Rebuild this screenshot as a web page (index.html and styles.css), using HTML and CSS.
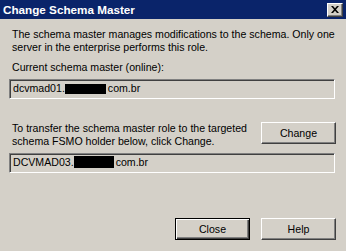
FILE: index.html
```html
<!DOCTYPE html>
<html>
<head>
<meta charset="utf-8">
<link rel="stylesheet" href="styles.css">
</head>
<body>
<div class="dialog">
  <div class="titlebar">
    <span class="title">Change Schema Master</span>
    <span class="close-btn"><svg width="8" height="7" viewBox="0 0 8 7"><path d="M0 0h2l2 2.3L6 0h2L5 3.5 8 7H6L4 4.7 2 7H0l3-3.5z" fill="#000"/></svg></span>
  </div>
  <div class="content">
    <p class="desc">The schema master manages modifications to the schema. Only one<br>server in the enterprise performs this role.</p>
    <div class="label">Current schema master (online):</div>
    <div class="field">dcvmad01.<span class="redact r1"></span>com.br</div>
    <div class="transfer-row">
      <p class="desc">To transfer the schema master role to the targeted<br>schema FSMO holder below, click Change.</p>
      <button class="btn">Change</button>
    </div>
    <div class="field f2">DCVMAD03.<span class="redact r2"></span>com.br</div>
    <div class="footer">
      <button class="btn default">Close</button>
      <button class="btn">Help</button>
    </div>
  </div>
</div>
</body>
</html>
```
FILE: styles.css
```css
html, body {
  margin: 0;
  padding: 0;
}
body {
  width: 346px;
  height: 251px;
  overflow: hidden;
  background: #d4d0c8;
  font-family: "Liberation Sans", Arial, sans-serif;
  font-size: 10.6px;
  color: #000;
}
.dialog {
  display: flex;
  flex-direction: column;
  height: 251px;
}
.titlebar {
  height: 19px;
  background: #0a246a;
  display: flex;
  align-items: center;
  justify-content: space-between;
  padding: 0 3px;
}
.title {
  color: #fff;
  font-weight: bold;
  font-size: 11.7px;
}
.close-btn {
  width: 16px;
  height: 14px;
  box-sizing: border-box;
  background: #d4d0c8;
  border: 1px solid;
  border-color: #fff #404040 #404040 #fff;
  box-shadow: inset -1px -1px #808080;
  display: flex;
  align-items: center;
  justify-content: center;
}
.close-btn svg {
  display: block;
}
.content {
  display: flex;
  flex-direction: column;
  padding: 9px 10px 0 9px;
}
.desc {
  margin: 0 0 0 3px;
  line-height: 13px;
}
.label {
  margin: 7px 0 0 3px;
  line-height: 13px;
}
.field {
  margin: 5px 1px 0 0;
  height: 20px;
  box-sizing: border-box;
  border: 1px solid;
  border-color: #808080 #fff #fff #808080;
  box-shadow: inset 1px 1px #404040, inset -1px -1px #d4d0c8;
  padding: 2px 0 0 3px;
  line-height: 13px;
  white-space: nowrap;
}
.redact {
  display: inline-block;
  background: #000;
  margin-right: 2px;
  vertical-align: -2px;
}
.r1 {
  width: 41px;
  height: 10px;
}
.r2 {
  width: 40px;
  height: 12px;
}
.transfer-row {
  margin-top: 23px;
  display: flex;
  justify-content: space-between;
  align-items: flex-start;
}
.btn {
  width: 75px;
  height: 22px;
  padding: 0;
  font-family: inherit;
  font-size: 10.6px;
  line-height: 13px;
  color: #000;
  background: #d4d0c8;
  border: 1px solid;
  border-color: #fff #404040 #404040 #fff;
  box-shadow: inset -1px -1px #808080;
}
.btn.default {
  border-color: #000;
  box-shadow: inset 1px 1px #fff, inset -1px -1px #404040, inset -2px -2px #808080;
}
.footer {
  margin-top: 45px;
  display: flex;
  justify-content: flex-end;
  gap: 11px;
}
```
